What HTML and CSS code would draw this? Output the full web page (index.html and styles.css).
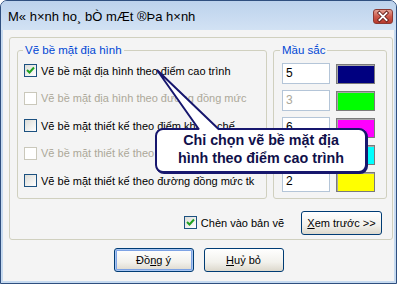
FILE: index.html
```html
<!DOCTYPE html>
<html lang="vi">
<head>
  <meta charset="UTF-8" />
  <title>Mô hình hoá bề mặt địa hình</title>
  <link rel="stylesheet" href="styles.css">
</head>
<body>
  <div class="window">
    <div class="titlebar">
      <span class="title">M« h×nh ho¸ bÒ mÆt ®Þa h×nh</span>
      <span class="close-btn">
        <svg width="20" height="15" viewBox="0 0 20 15">
          <path d="M6 3.5 L14 11.5 M14 3.5 L6 11.5" stroke="#6b2620" stroke-width="4" stroke-linecap="square"/>
          <path d="M6 3.5 L14 11.5 M14 3.5 L6 11.5" stroke="#fff" stroke-width="2" stroke-linecap="square"/>
        </svg>
      </span>
    </div>

    <div class="client">
      <div class="frame">
        <div class="groups">
          <fieldset class="group group-left">
            <legend>Vẽ bề mặt địa hình</legend>
            <div class="check-row">
              <span class="checkbox checked">
                <svg width="11" height="11" viewBox="0 0 11 11"><path d="M2 5 L4.5 7.5 L9 2.5" fill="none" stroke="#21a121" stroke-width="2"/></svg>
              </span>
              Vẽ bề mặt địa hình theo điểm cao trình
            </div>
            <div class="check-row disabled">
              <span class="checkbox"></span>
              Vẽ bề mặt địa hình theo đường đồng mức
            </div>
            <div class="check-row">
              <span class="checkbox"></span>
              Vẽ bề mặt thiết kế theo điểm khống chế
            </div>
            <div class="check-row disabled">
              <span class="checkbox"></span>
              Vẽ bề mặt thiết kế theo
            </div>
            <div class="check-row">
              <span class="checkbox"></span>
              Vẽ bề mặt thiết kế theo đường đồng mức tk
            </div>
          </fieldset>

          <fieldset class="group group-right">
            <legend>Mầu sắc</legend>
            <div class="color-row">
              <span class="num-input">5</span>
              <span class="swatch swatch-navy"></span>
            </div>
            <div class="color-row">
              <span class="num-input disabled">3</span>
              <span class="swatch swatch-lime"></span>
            </div>
            <div class="color-row">
              <span class="num-input">6</span>
              <span class="swatch swatch-magenta"></span>
            </div>
            <div class="color-row">
              <span class="num-input disabled"></span>
              <span class="swatch swatch-cyan"></span>
            </div>
            <div class="color-row">
              <span class="num-input">2</span>
              <span class="swatch swatch-yellow"></span>
            </div>
          </fieldset>
        </div>

        <div class="frame-footer">
          <div class="check-row">
            <span class="checkbox checked">
              <svg width="11" height="11" viewBox="0 0 11 11"><path d="M2 5 L4.5 7.5 L9 2.5" fill="none" stroke="#21a121" stroke-width="2"/></svg>
            </span>
            Chèn vào bản vẽ
          </div>
          <button class="btn btn-preview"><u>X</u>em trước &gt;&gt;</button>
        </div>
      </div>

      <div class="actions">
        <button class="btn btn-default">Đồ<u>n</u>g ý</button>
        <button class="btn"><u>H</u>uỷ bỏ</button>
      </div>
    </div>

    <div class="callout">Chỉ chọn vẽ bề mặt địa<br>hình theo điểm cao trình</div>
    <svg class="callout-tail" width="75" height="70" viewBox="150 64 75 70">
      <polygon points="157,70 200,131 220,131" fill="#fff"/>
      <polyline points="199,129.5 157,70 219,129.5" fill="none" stroke="#17176e" stroke-width="2"/>
    </svg>
  </div>
</body>
</html>
```

FILE: styles.css
```css
* {
  margin: 0;
  padding: 0;
  box-sizing: border-box;
}

body {
  font-family: "Liberation Sans", Arial, sans-serif;
  font-size: 11px;
  background: #fff;
  color: #000;
}

.window {
  position: relative;
  width: 397px;
  height: 284px;
  border: 1px solid #2f4f7f;
  border-radius: 7px 7px 0 0;
  background: #c6daf0;
  display: flex;
  flex-direction: column;
  overflow: hidden;
}

.titlebar {
  height: 29px;
  display: flex;
  align-items: center;
  justify-content: space-between;
  padding: 0 3px 0 7px;
  background: linear-gradient(to bottom, #bcd2ec, #d2e2f4);
}

.title {
  font-size: 13px;
  color: #000;
  margin-top: 2px;
}

.close-btn {
  width: 20px;
  height: 15px;
  border: 1px solid #8c3a33;
  border-radius: 3px;
  background: linear-gradient(to bottom, #e3a193, #cc5a4c 50%, #b8392c);
  display: flex;
  align-items: center;
  justify-content: center;
  margin-top: 1px;
}

.close-btn svg {
  display: block;
}

.client {
  flex: 1;
  margin: 0 2px 2px 2px;
  background: #f4f4f4;
  padding: 7px 1px 0 6px;
  display: flex;
  flex-direction: column;
}

.frame {
  height: 203px;
  border: 1px solid #d0d0bf;
  border-radius: 3px;
  padding-top: 6px;
  display: flex;
  flex-direction: column;
}

.groups {
  display: flex;
  gap: 6px;
  padding: 0 5px 0 7px;
  height: 155px;
}

.group {
  border: 1px solid #d0d0bf;
  border-radius: 3px;
  min-width: 0;
}

.group legend {
  color: #0046d5;
  font-size: 11.5px;
  line-height: 12px;
  padding: 0 2px;
}

.group-left {
  width: 250px;
  padding: 1px 0 0 6px;
}

.group-left legend {
  margin-left: -1px;
}

.group-right {
  flex: 1;
  padding: 4px 0 0 8px;
}

.group-right legend {
  margin-left: -2px;
}

.check-row {
  height: 27.5px;
  display: flex;
  align-items: center;
  gap: 4px;
  font-size: 11px;
  white-space: nowrap;
}

.check-row.disabled {
  color: #aca899;
}

.checkbox {
  width: 13px;
  height: 13px;
  flex-shrink: 0;
  border: 1px solid #1c5180;
  background: linear-gradient(135deg, #dcdcd7, #fff);
  display: flex;
  align-items: center;
  justify-content: center;
}

.checkbox svg {
  display: block;
}

.disabled .checkbox {
  border-color: #cac8bb;
  background: #fff;
}

.color-row {
  height: 27px;
  display: flex;
  align-items: center;
  gap: 6px;
}

.num-input {
  width: 48px;
  height: 21px;
  border: 1px solid #b4c5d8;
  background: #fff;
  padding-left: 3px;
  font-size: 12px;
  line-height: 19px;
}

.num-input.disabled {
  color: #aca899;
}

.swatch {
  width: 39px;
  height: 20px;
  border: 1px solid #7a7a7a;
  box-shadow: inset 1px 1px 0 #a8a8a8;
}

.swatch-navy { background: #000080; }
.swatch-lime { background: #00ff00; }
.swatch-magenta { background: #ff00ff; }
.swatch-cyan { background: #00ffff; }
.swatch-yellow { background: #ffff00; }

.frame-footer {
  display: flex;
  align-items: center;
  justify-content: flex-end;
  gap: 17px;
  margin-top: 10px;
  padding-right: 10px;
}

.btn {
  font-family: "Liberation Sans", Arial, sans-serif;
  font-size: 11px;
  color: #000;
  height: 24px;
  width: 80px;
  border: 1px solid #003c74;
  border-radius: 3px;
  background: linear-gradient(to bottom, #fff, #f2f1ec 60%, #dcd8cc);
}

.btn-preview {
  width: 81px;
}

.btn-default {
  box-shadow: inset 0 0 0 1px #a9c6f2, inset 0 0 0 2px #7ea3e4;
}

.actions {
  display: flex;
  justify-content: center;
  gap: 10px;
  margin-top: 8px;
  padding-right: 5px;
}

.callout {
  position: absolute;
  left: 154px;
  top: 127px;
  width: 212px;
  height: 45px;
  border: 2px solid #17176e;
  border-radius: 8px;
  box-shadow: 1px 1px 0 #17176e;
  background: #fff;
  color: #10104a;
  font-size: 14.3px;
  font-weight: bold;
  line-height: 18px;
  text-align: center;
  padding-top: 1px;
}

.callout-tail {
  position: absolute;
  left: 149px;
  top: 63px;
}
```
